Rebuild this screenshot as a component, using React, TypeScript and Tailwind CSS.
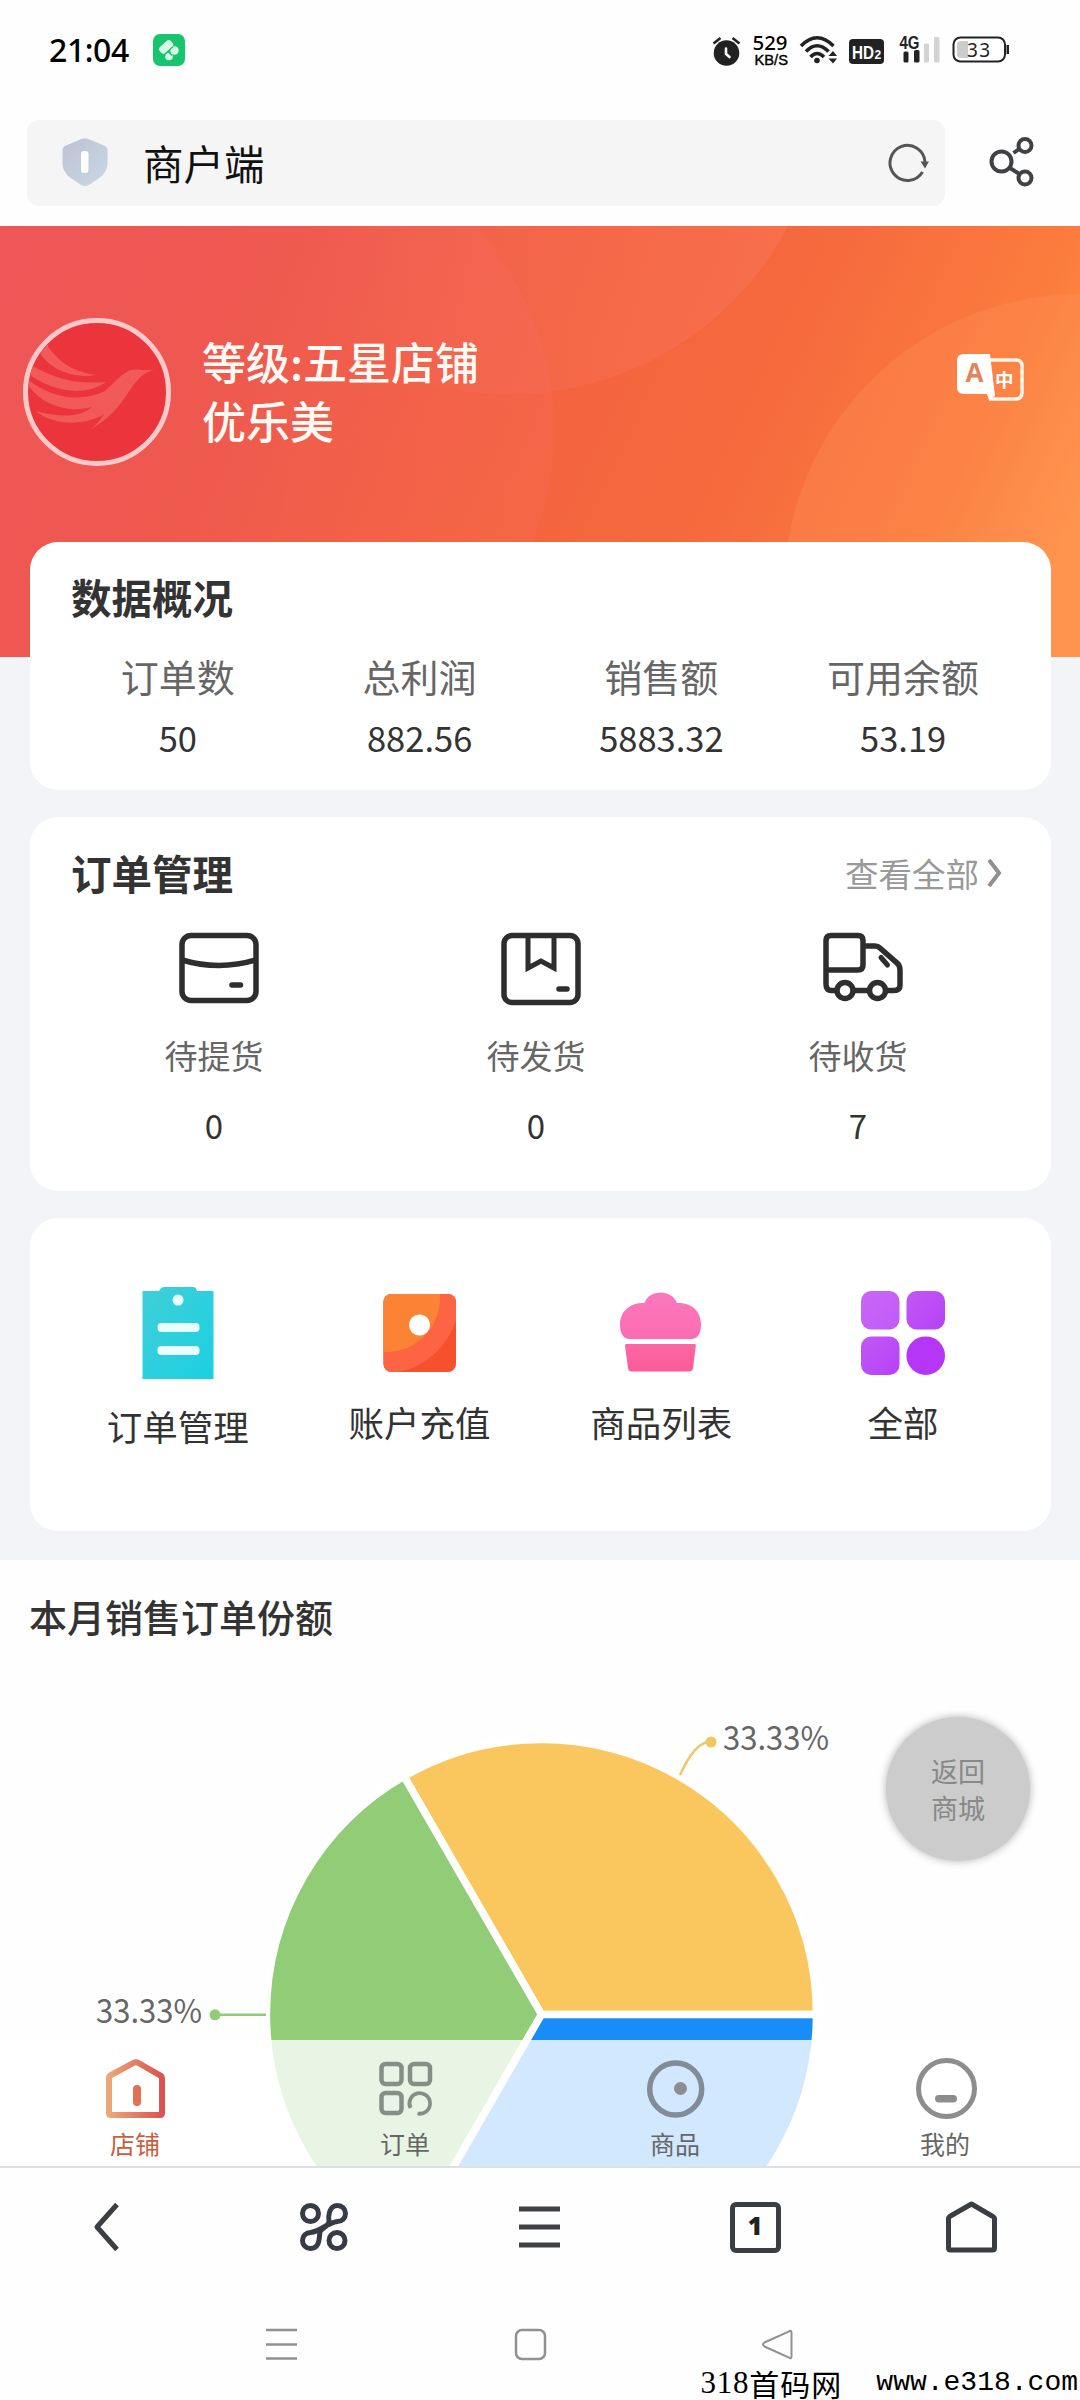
import type { ReactNode } from "react";

const stats = [
  { label: "订单数", value: "50" },
  { label: "总利润", value: "882.56" },
  { label: "销售额", value: "5883.32" },
  { label: "可用余额", value: "53.19" },
];

function StatusBar() {
  return (
    <div className="flex h-[120px] items-start pl-[49px] pt-[26px] text-black">
      <div className="flex h-12 items-center">
        <span className="font-['Noto_Sans'] text-[32px] font-medium leading-[48px] tracking-[-0.4px]">21:04</span>
        <svg className="ml-6" width="32" height="32" viewBox="0 0 32 32">
          <rect width="32" height="32" rx="7" fill="#16c56e" />
          <rect x="6" y="9" width="15" height="8.500" rx="3.500" fill="#d9fbe6" transform="rotate(-42 13 13.5)" />
          <circle cx="21.500" cy="16.500" r="4.200" fill="#d9fbe6" />
          <circle cx="16" cy="22.500" r="3.800" fill="#d9fbe6" />
          <path d="M10 22 L20 12.500 M15 17.500 L19 21.500" stroke="#16c56e" strokeWidth="1.200" />
        </svg>
      </div>
      <svg className="ml-auto mr-[69px]" width="300" height="48" viewBox="711 26 300 48">
        <g fill="#222">
          <circle cx="726.5" cy="53" r="12.8" />
          <path d="M713.5 43.500 L720.5 38 M739.5 43.500 L732.5 38" stroke="#222" strokeWidth="2.6" />
          <path d="M726 48.500 V54 L729.5 57" stroke="#fff" strokeWidth="2.6" fill="none" strokeLinecap="round" />
        </g>
        <text x="752.5" y="50" fontSize="19.500" fontWeight="500" textLength="35" lengthAdjust="spacingAndGlyphs" fontFamily="Noto Sans">529</text>
        <text x="754.5" y="64.5" fontSize="15" fontWeight="500" textLength="33.500" lengthAdjust="spacingAndGlyphs" fontFamily="Liberation Sans" stroke="#000" strokeWidth=".4">KB/S</text>
        <g fill="none" stroke="#222" strokeWidth="3.6">
          <path d="M801 46 Q817 29.5 833.5 46" />
          <path d="M806 51.500 Q817 40 828.5 51.500" />
          <path d="M810.5 57 Q817 50 824 57" />
        </g>
        <circle cx="817" cy="60.5" r="2.8" fill="#222" />
        <path d="M828.5 56 L833 51 L837 56 Z M828.5 58.5 H837 L833 63.5 Z" fill="#222" />
        <rect x="849" y="39" width="35" height="25" rx="4" fill="#222" />
        <text x="852" y="58.500" fontSize="19" fontWeight="700" fill="#fff" textLength="22" lengthAdjust="spacingAndGlyphs" fontFamily="Liberation Sans">HD</text>
        <text x="874.500" y="58.5" fontSize="12" fontWeight="700" fill="#fff" fontFamily="Liberation Sans">2</text>
        <text x="899.5" y="48.500" fontSize="18" fontWeight="700" fill="#222" textLength="20" lengthAdjust="spacingAndGlyphs" fontFamily="Liberation Sans">4G</text>
        <rect x="903.5" y="51.5" width="5" height="11" rx="1.5" fill="#222" />
        <rect x="914" y="50" width="5.5" height="12.5" rx="1.5" fill="#222" />
        <rect x="924" y="43.5" width="5" height="19" rx="1" fill="#d3d3d3" />
        <rect x="934" y="37" width="5.5" height="25.5" rx="1" fill="#d3d3d3" />
        <rect x="953.5" y="37.5" width="51.5" height="24" rx="7" fill="#fff" stroke="#222" strokeWidth="2" />
        <path d="M961 41 H968 V58 H961 Q957 58 957 54 V45 Q957 41 961 41 Z" fill="#ccc" />
        <rect x="1006.5" y="45" width="2.5" height="9" fill="#222" />
        <text x="967" y="56.5" fontSize="19" textLength="23" fill="#222" fontFamily="Noto Sans">33</text>
      </svg>
    </div>
  );
}

function AddressBar() {
  return (
    <div className="flex h-[106px] items-start pl-[27px]">
      <div className="flex h-[86px] w-[918px] items-center rounded-xl bg-[#f5f5f5]">
        <svg className="ml-[35px] -mt-0.5" width="46" height="50" viewBox="0 0 46 50">
          <defs>
            <linearGradient id="shield" x1="0" y1="0" x2="1" y2="1">
              <stop offset="0" stopColor="#bcc3d2" />
              <stop offset="1" stopColor="#c9d7e4" />
            </linearGradient>
          </defs>
          <path d="M20 1.8 Q23 .6 26 1.8 L42 8.5 Q45.500 10 45.500 13 V27 Q45 35 38 40.500 L27 48 Q23 50 19 48 L8 40.500 Q.8 35 .5 27 V13 Q.5 10 4 8.500 Z" fill="url(#shield)" />
          <rect x="19" y="14" width="7.500" height="22" rx="3" fill="#fff" />
        </svg>
        <span className="ml-[35px] text-[40.5px] leading-[56px] text-[#111]">商户端</span>
        <svg className="ml-auto mr-4" width="42" height="44" viewBox="0 0 42 44" fill="none">
          <path d="M35.500 31 A17.500 17.500 0 1 1 38 21" stroke="#555" strokeWidth="3" />
          <path d="M33.500 20.500 H42 L38 27.500 Z" fill="#555" />
        </svg>
      </div>
      <svg className="ml-[43px] mt-4" width="48" height="52" viewBox="988 136 48 52" fill="none" stroke="#3f4144" strokeWidth="4">
        <circle cx="1001.500" cy="161.500" r="10" />
        <circle cx="1025" cy="145.500" r="6.500" />
        <circle cx="1025" cy="178" r="6.500" />
        <path d="M1013.500 153 L1019 149 M1010 168 L1020 174.500" />
      </svg>
    </div>
  );
}

function ProfileHeader() {
  return (
    <div className="relative h-[431px] overflow-hidden bg-[linear-gradient(115deg,#ef5658_0%,#ee5850_20%,#f3633f_48%,#f66a3e_66%,#fb7c3d_84%,#ff9349_95%)]">
      <svg className="absolute inset-0" width="1080" height="431" viewBox="0 226 1080 431">
        <defs>
          <linearGradient id="glow" x1="0" y1="0" x2="1" y2="0">
            <stop offset=".2" stopColor="#ff8a90" stopOpacity="0" />
            <stop offset="1" stopColor="#ff8070" stopOpacity=".28" />
          </linearGradient>
          <linearGradient id="haze" x1="0" y1="0" x2="1" y2="0">
            <stop offset=".4" stopColor="#ff7080" stopOpacity="0" />
            <stop offset="1" stopColor="#ff7080" stopOpacity=".13" />
          </linearGradient>
        </defs>
        <circle cx="510" cy="80" r="314" fill="url(#glow)" />
        <circle cx="250" cy="430" r="304" fill="url(#haze)" />
        <circle cx="1080" cy="590" r="296" fill="#ff9c60" opacity=".24" />
      </svg>
      <div className="relative flex items-start">
        <div className="ml-[23px] mt-[92px] h-[148px] w-[148px] overflow-hidden rounded-full border-[5px] border-[#fcc9c9] bg-[#eb343b]">
          <svg width="138" height="138" viewBox="0 0 138 138" fill="#f15a59">
            <path d="M17 18 C25 34 42 49 68 52 C45 56 20 46 11 28 Z" />
            <path d="M4 43 C24 53 42 62 78 59 C54 76 20 66 1 51 Z" />
            <path d="M0 57 C22 73 49 81 77 68 C88 58 94 50 103 47 C110 45 118 49 127 46 C116 50 113 53 107 60 C95 76 90 90 62 107 C69 101 73 96 76 91 C60 102 26 104 8 88 C32 95 53 94 64 84 C38 91 12 80 0 62 Z" />
          </svg>
        </div>
        <div className="ml-[31px] mt-[106px] text-[44px] font-medium leading-[59px] text-[#fffaf4]">
          <p>等级:五星店铺</p>
          <p>优乐美</p>
        </div>
        <svg className="ml-auto mr-14 mt-[127px]" width="68" height="49" viewBox="0 0 68 49">
          <path d="M31 7 H60 Q66 7 66 13 V39 Q66 46 60 46 H33" fill="none" stroke="#fff2e6" strokeWidth="3.500" />
          <path d="M8 1 H34 L39 43 L33 47 L31 41 H8 Q1 41 1 34 V8 Q1 1 8 1 Z" fill="#fff" />
          <text x="9.500" y="29" fontSize="26" fontWeight="700" fill="#e0855c" textLength="18" lengthAdjust="spacingAndGlyphs" fontFamily="Open Sans">A</text>
          <text x="39" y="34" fontSize="18.500" fontWeight="700" fill="#fff" fontFamily="Noto Sans CJK SC">中</text>
        </svg>
      </div>
    </div>
  );
}

const orders = [
  {
    label: "待提货",
    value: "0",
    icon: (
      <>
        <rect x="3" y="7.500" width="74" height="65" rx="9" />
        <path d="M3 32 Q40 43 77 32" />
        <path d="M53 57 H61.500" strokeLinecap="round" />
      </>
    ),
  },
  {
    label: "待发货",
    value: "0",
    icon: (
      <>
        <rect x="3" y="7.500" width="74" height="67" rx="8" />
        <path d="M27 8 V40 L40 33 L53 40 V8" strokeWidth="5" />
        <path d="M58 61 H66" strokeLinecap="round" />
      </>
    ),
  },
  {
    label: "待收货",
    value: "7",
    icon: (
      <>
        <path d="M3 43 V12.500 Q3 7.500 8 7.500 H35 Q40 7.500 40 12.500 V37 Q40 42 35 42 H3 V56 Q3 62 8 62.500 H12" />
        <path d="M40 18 H52 Q55 18 57 20 L73 34 Q77 37 77 42 V57 Q77 62.500 71 62.500 H63 M29 62.500 H45" />
        <path d="M58 29.500 L64.500 37" strokeLinecap="round" strokeWidth="5" />
        <circle cx="22" cy="62.500" r="8" />
        <circle cx="54.500" cy="62.500" r="8" />
      </>
    ),
  },
];

const shortcuts: { label: string; icon: ReactNode }[] = [
  {
    label: "订单管理",
    icon: (
      <>
        <path d="M14.500 8 H31 Q33 4 36 4 H65 Q68 4 69 8 H85.500 V96 H14.500 Z" fill="url(#teal)" />
        <circle cx="50" cy="17" r="5.500" fill="#e9feff" />
        <rect x="29.500" y="40" width="42" height="9" rx="4" fill="#e9feff" />
        <rect x="29.500" y="63" width="42" height="9" rx="4" fill="#e9feff" />
      </>
    ),
  },
  {
    label: "账户充值",
    icon: (
      <>
        <clipPath id="wallet">
          <rect x="13.500" y="11" width="72.500" height="78" rx="8" />
        </clipPath>
        <g clipPath="url(#wallet)">
          <rect width="100" height="100" fill="#f6502d" />
          <circle cx="12" cy="13" r="78" fill="#fc6443" />
          <circle cx="16" cy="15" r="54" fill="#fd8334" />
        </g>
        <circle cx="49.500" cy="42" r="10.500" fill="#fff" />
      </>
    ),
  },
  {
    label: "商品列表",
    icon: (
      <>
        <path d="M33.500 20 C38 6 61 6 66 20 C81 19 90 29 90 41 Q90 56 80 56 H19 Q9 56 9 41 C9 29 19 19 33.500 20 Z" fill="url(#pink)" />
        <path d="M15 61 H84 Q85 61 84.800 63 L82 85 Q81.500 88.500 78 88.500 H21 Q17.500 88.500 17 85 L14 63 Q14 61 15 61 Z" fill="url(#rose)" />
      </>
    ),
  },
  {
    label: "全部",
    icon: (
      <>
        <rect x="8" y="8" width="38.500" height="38.500" rx="10" fill="url(#violetLight)" />
        <rect x="53.500" y="8" width="38.500" height="38.500" rx="10" fill="url(#violet)" />
        <rect x="8" y="53.500" width="38.500" height="38.500" rx="10" fill="url(#violet)" />
        <circle cx="72.700" cy="72.700" r="19.300" fill="#b636f8" />
      </>
    ),
  },
];

function IconGradients() {
  return (
    <defs>
      <linearGradient id="teal" x1="0" y1="0" x2="1" y2="1">
        <stop offset="0" stopColor="#40cfd8" />
        <stop offset="1" stopColor="#1bd0e2" />
      </linearGradient>
      <linearGradient id="pink" x1="0" y1="0" x2="0" y2="1">
        <stop offset="0" stopColor="#fb78bd" />
        <stop offset="1" stopColor="#fc6cb0" />
      </linearGradient>
      <linearGradient id="rose" x1="0" y1="0" x2="0" y2="1">
        <stop offset="0" stopColor="#fc67a4" />
        <stop offset="1" stopColor="#fc5b98" />
      </linearGradient>
      <linearGradient id="violetLight" x1="0" y1="0" x2="1" y2="1">
        <stop offset="0" stopColor="#c966f8" />
        <stop offset="1" stopColor="#c05bf7" />
      </linearGradient>
      <linearGradient id="violet" x1="0" y1="0" x2="1" y2="1">
        <stop offset="0" stopColor="#c158f7" />
        <stop offset="1" stopColor="#b642f5" />
      </linearGradient>
    </defs>
  );
}

function SalesChart() {
  return (
    <svg className="block" width="1080" height="522" viewBox="0 1644 1080 522">
      <g stroke="#fff" strokeWidth="7.500" strokeLinejoin="round">
        <path d="M541.500 2014.500 H816.500 A275 275 0 0 0 404 1776.300 Z" fill="#fac75f" />
        <path d="M541.500 2014.500 L404 1776.300 A275 275 0 0 0 404 2252.700 Z" fill="#91cc77" />
        <path d="M541.500 2014.500 L404 2252.700 A275 275 0 0 0 816.500 2014.500 Z" fill="#188df8" />
      </g>
      <path d="M680 1775 Q694 1744 708 1742" fill="none" stroke="#ecc968" strokeWidth="2.500" />
      <circle cx="711" cy="1742" r="5.500" fill="#f0c75c" />
      <path d="M215 2014.800 H266" stroke="#91cc77" strokeWidth="2.500" />
      <circle cx="215" cy="2014.800" r="5.500" fill="#91cc77" />
      <g fontSize="33" fill="#666" fontFamily="Noto Sans CJK SC">
        <text x="723" y="1750" textLength="106" lengthAdjust="spacingAndGlyphs">33.33%</text>
        <text x="96" y="2022.500" textLength="106" lengthAdjust="spacingAndGlyphs">33.33%</text>
      </g>
    </svg>
  );
}

function TabBar() {
  return (
    <div className="absolute inset-x-0 bottom-0 grid h-[126px] grid-cols-4 bg-white/80 pt-[15px] text-center text-[25px] leading-9 text-[#666]">
      <div className="flex flex-col items-center text-[#c65f40]">
        <svg width="68" height="68" viewBox="0 0 68 68" fill="none">
          <defs>
            <linearGradient id="shop" x1="0" y1="0" x2="1" y2="0">
              <stop offset="0" stopColor="#eba778" />
              <stop offset="1" stopColor="#d95350" />
            </linearGradient>
          </defs>
          <path d="M8 23.500 Q8 21 10 20 L32.500 8 Q35 6.500 37.500 8 L58.500 20 Q61 21 61 24 V58 Q61 60 59 60 H10 Q8 60 8 58 Z" stroke="url(#shop)" strokeWidth="6" />
          <rect x="32" y="30" width="8" height="21" rx="4" fill="#e17055" />
        </svg>
        <span className="mt-[2px]">店铺</span>
      </div>
      <div className="flex flex-col items-center">
        <svg width="68" height="68" viewBox="0 0 68 68" fill="none" stroke="#858f86" strokeWidth="4.500">
          <rect x="10.500" y="9" width="20" height="20" rx="4" />
          <rect x="39" y="9" width="20" height="20" rx="4" />
          <rect x="10.500" y="38" width="20" height="20" rx="4" />
          <path d="M39.500 53 A10.300 10.300 0 1 1 46.500 58.500" strokeWidth="3.800" />
        </svg>
        <span className="mt-[2px]">订单</span>
      </div>
      <div className="flex flex-col items-center">
        <svg width="68" height="68" viewBox="0 0 68 68" fill="none">
          <circle cx="34.700" cy="34" r="26" stroke="#828c97" strokeWidth="5.500" />
          <circle cx="39.500" cy="33.500" r="6.500" fill="#8b8d90" />
        </svg>
        <span className="mt-[2px]">商品</span>
      </div>
      <div className="flex flex-col items-center">
        <svg width="68" height="68" viewBox="0 0 68 68" fill="none">
          <circle cx="35.500" cy="33.500" r="28" stroke="#8d8d8d" strokeWidth="5" />
          <rect x="24" y="40" width="22" height="7.500" rx="3.700" fill="#8d8d8d" />
        </svg>
        <span className="mt-[2px]">我的</span>
      </div>
    </div>
  );
}

function BrowserToolbar() {
  return (
    <div className="grid h-[120px] grid-cols-5 items-center justify-items-center border-t-2 border-[#dde1e4]">
      <svg width="60" height="60" viewBox="0 0 60 60" fill="none" stroke="#3b3f43" strokeWidth="5" strokeLinejoin="round">
        <path d="M39 7.500 L19 30 L39 52.500" />
      </svg>
      <svg width="60" height="60" viewBox="0 0 60 60" fill="none" stroke="#363b44" strokeWidth="5">
        <circle cx="16.500" cy="16.500" r="8" />
        <circle cx="43" cy="43.500" r="8" />
        <path d="M35 25 C34 19 35 8.500 43.500 8.500 A8 8 0 0 1 43.500 24.500 C32 26 28 34 16.500 35.500 A8 8 0 0 0 16.500 51.500 C26 51.500 25 41 26 35 C27 31 34 30 35 25 Z" />
      </svg>
      <svg width="60" height="60" viewBox="0 0 60 60" fill="none" stroke="#3e4244" strokeWidth="5">
        <path d="M9 12 H50 M9 30 H50 M9 48 H50" />
      </svg>
      <div className="mr-0.5 flex h-[51px] w-[51px] items-center justify-center rounded-[6px] border-[5px] border-[#3b3f43] pb-[3px] font-['Open_Sans'] text-[25px] font-extrabold leading-none text-[#222]">
        1
      </div>
      <svg width="60" height="60" viewBox="0 0 60 60" fill="none" stroke="#3a3d44" strokeWidth="5" strokeLinejoin="round">
        <path d="M6.500 22 Q6.500 20 8.500 19 L29.500 7 L50 19 Q52.500 20 52.500 22 V51 Q52.500 53 50.500 53 H8.500 Q6.500 53 6.500 51 Z" />
      </svg>
    </div>
  );
}

function SystemNav() {
  return (
    <div className="relative h-[114px]">
      <svg className="block" width="1080" height="100" viewBox="0 2286 1080 100" fill="none" stroke="#919191" strokeWidth="2.500">
        <path d="M266 2330 H297 M266 2344.500 H297 M266 2358.500 H297" />
        <rect x="516" y="2330" width="29" height="29" rx="6" />
        <path d="M789 2331.500 Q791.500 2329.500 791.500 2333 V2356 Q791.500 2359.500 789 2357.500 L764.500 2346.500 Q761.500 2344.500 764.500 2342.500 Z" strokeWidth="2" />
      </svg>
      <div className="absolute bottom-0 right-0.5 flex h-[34px] items-center leading-[34px] text-black">
        <span className="font-['Liberation_Serif'] text-[31px] tracking-[0.8px]">318</span>
        <span className="text-[30px] leading-[34px] tracking-[1px]">首码网</span>
        <span className="ml-[34px] font-['Liberation_Mono'] text-[28px]">www.e318.com</span>
      </div>
    </div>
  );
}

export default function App() {
  return (
    <div className="flex h-[2400px] w-[1080px] flex-col overflow-hidden bg-[#fefefe] font-['Noto_Sans_CJK_SC',sans-serif] text-[#333]">
      <StatusBar />
      <AddressBar />
      <main className="bg-[#f2f4f7]">
        <ProfileHeader />
        <div className="relative mx-[30px] -mt-[115px] mr-[29px] flex flex-col gap-[27px]">
          <section className="h-[248px] rounded-[28px] bg-white pt-[27px]">
            <h2 className="pl-[41px] text-[40.5px] font-bold leading-[56px]">数据概况</h2>
            <div className="mt-[27px] grid grid-cols-4 px-[27px] text-center">
              {stats.map((s) => (
                <div key={s.label}>
                  <p className="text-[38px] leading-[48px] text-[#666]">{s.label}</p>
                  <p className="mt-[15px] text-[34.5px] leading-[44px]">{s.value}</p>
                </div>
              ))}
            </div>
          </section>

          <section className="h-[374px] rounded-[28px] bg-white pt-[28px]">
            <div className="flex items-center justify-between pl-[41px] pr-[49px]">
              <h2 className="text-[40.5px] font-bold leading-[56px]">订单管理</h2>
              <div className="flex items-center text-[33.5px] leading-[56px] text-[#999]">
                查看全部
                <svg className="ml-[7px]" width="16" height="30" viewBox="0 0 16 30" fill="none" stroke="#8f8f8f" strokeWidth="4">
                  <path d="M3 2 L13 15 L3 28" />
                </svg>
              </div>
            </div>
            <div className="mt-[27px] grid grid-cols-3 pl-[23px] pr-8 text-center">
              {orders.map((o) => (
                <div key={o.label} className="flex flex-col items-center">
                  <svg className="ml-[9px]" width="80" height="80" viewBox="0 0 80 80" fill="none" stroke="#2e2e2e" strokeWidth="5.500">
                    {o.icon}
                  </svg>
                  <p className="mt-[25px] text-[33px] leading-[44px] text-[#666]">{o.label}</p>
                  <p className="mt-[26px] text-[33px] leading-[44px]">{o.value}</p>
                </div>
              ))}
            </div>
          </section>

          <section className="h-[313px] rounded-[28px] bg-white pt-[65px]">
            <div className="grid grid-cols-4 px-[27px]">
              {shortcuts.map((s, i) => (
                <div key={s.label} className="flex flex-col items-center">
                  <svg width="100" height="100" viewBox="0 0 100 100">
                    <IconGradients />
                    {s.icon}
                  </svg>
                  <p className={i === 0 ? "mt-[19px] text-[35.5px] leading-[48px]" : "mt-[15px] text-[35.5px] leading-[48px]"}>
                    {s.label}
                  </p>
                </div>
              ))}
            </div>
          </section>
        </div>

        <section className="relative mt-[29px] h-[606px] overflow-hidden bg-[#fefefe] pt-[28px]">
          <h2 className="pl-[29px] text-[38px] font-medium leading-[56px]">本月销售订单份额</h2>
          <SalesChart />
          <div className="absolute right-[50px] top-[157px] flex h-36 w-36 items-center justify-center rounded-full bg-[#ccc] text-center text-[27px] leading-[37px] text-[#888] shadow-[0_0_8px_rgba(0,0,0,0.3)]">
            返回
            <br />
            商城
          </div>
          <TabBar />
        </section>
      </main>
      <BrowserToolbar />
      <SystemNav />
    </div>
  );
}
